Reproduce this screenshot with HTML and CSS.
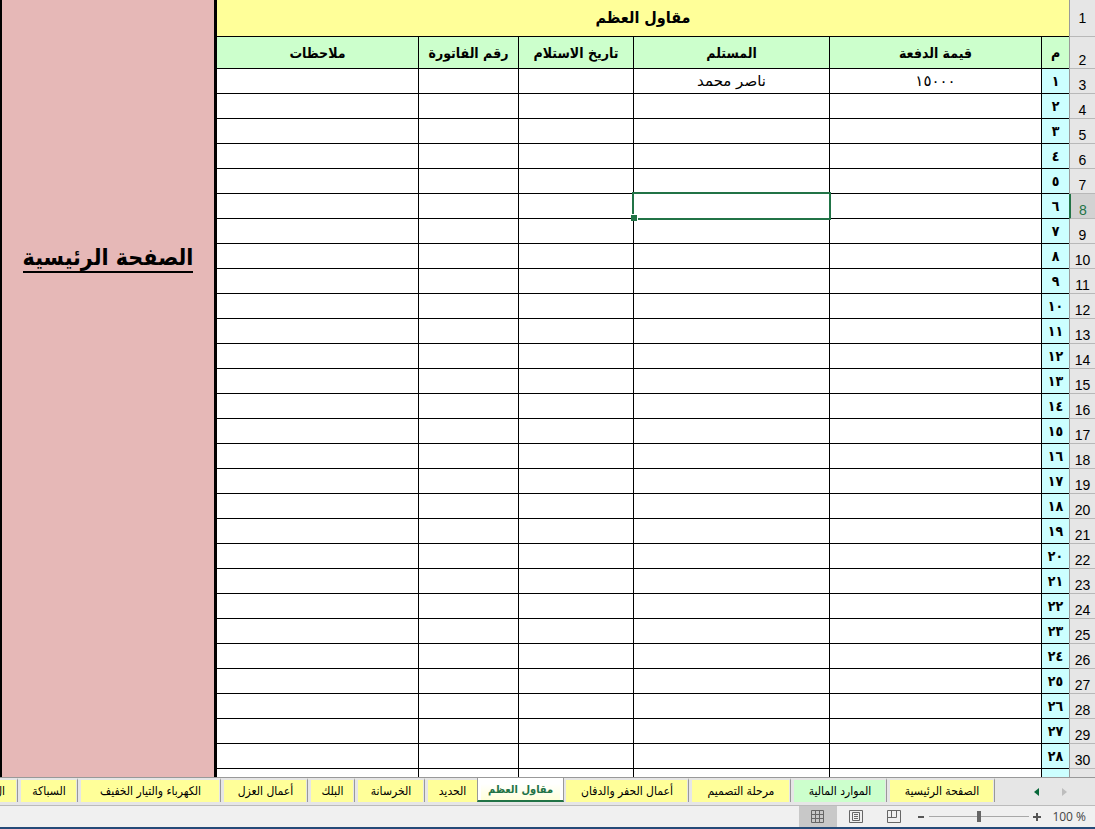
FILE: index.html
```html
<!DOCTYPE html>
<html lang="ar" dir="rtl">
<head>
<meta charset="utf-8">
<title>مقاول العظم</title>
<link rel="stylesheet" href="styles.css">
</head>
<body>
<main class="sheet">
  <table class="grid">
    <colgroup>
      <col class="col-head"><col class="col-index"><col class="col-value"><col class="col-receiver"><col class="col-date"><col class="col-invoice"><col class="col-notes">
    </colgroup>
    <thead>
      <tr class="title-row"><th class="row-head" scope="row">1</th><th class="title" colspan="6">مقاول العظم</th></tr>
      <tr class="label-row"><th class="row-head" scope="row">2</th><th scope="col">م</th><th scope="col">قيمة الدفعة</th><th scope="col">المستلم</th><th scope="col">تاريخ الاستلام</th><th scope="col">رقم الفاتورة</th><th scope="col">ملاحظات</th></tr>
    </thead>
    <tbody id="rows"></tbody>
  </table>
  <aside class="side"><a class="home-link" href="#home">الصفحة الرئيسية</a></aside>
</main>
<nav class="tabs" aria-label="أوراق العمل">
  <div class="tab-nav">
    <button class="arrow" aria-label="التالي" disabled><svg width="6" height="8" viewBox="0 0 6 8"><path d="M0 0L5 4L0 8Z" fill="#bdbdbd"/></svg></button>
    <button class="arrow" aria-label="السابق"><svg width="6" height="8" viewBox="0 0 6 8"><path d="M5 0L0 4L5 8Z" fill="#08683a"/></svg></button>
  </div>
  <button class="tab w-home">الصفحة الرئيسية</button>
  <button class="tab green w-funds">الموارد المالية</button>
  <button class="tab w-design">مرحلة التصميم</button>
  <button class="tab w-dig">أعمال الحفر والدفان</button>
  <button class="tab active w-frame" aria-current="page">مقاول العظم</button>
  <button class="tab after-active w-steel">الحديد</button>
  <button class="tab w-concrete">الخرسانة</button>
  <button class="tab w-block">البلك</button>
  <button class="tab w-insulation">أعمال العزل</button>
  <button class="tab w-electric">الكهرباء والتيار الخفيف</button>
  <button class="tab w-plumbing">السباكة</button>
  <button class="tab rest">ال</button>
</nav>
<footer class="status" dir="ltr">
  <button class="view selected" aria-label="عادي"><svg width="14" height="14" viewBox="0 0 14 14" fill="none" stroke="#666"><path d="M.5 .5H12.500V12.500H.5ZM4.500 .5V12.500M8.500 .5V12.500M.5 4.500H12.500M.5 8.500H12.500"/></svg></button>
  <button class="view" aria-label="تخطيط الصفحة"><svg width="14" height="14" viewBox="0 0 14 14" fill="none" stroke="#666"><path d="M.5 .5H13.500V12.500H.5ZM3.500 2.500H10.500V10.500H3.500ZM5 4.500H9M5 6.500H9M5 8.500H9"/></svg></button>
  <button class="view" aria-label="فواصل الصفحات"><svg width="14" height="14" viewBox="0 0 14 14" fill="none" stroke="#666"><path d="M.5 .5H13.500V12.500H.5ZM.5 7.500H9.500V.5M4.500 .5V7.500"/></svg></button>
  <button class="step" aria-label="تصغير"><svg width="8" height="8" viewBox="0 0 8 8"><path d="M1 3H7V5H1Z" fill="#555"/></svg></button>
  <input class="zoom" type="range" min="0" max="100" value="50" aria-label="تكبير">
  <button class="step" aria-label="تكبير"><svg width="8" height="8" viewBox="0 0 8 8"><path d="M3 0H5V3H8V5H5V8H3V5H0V3H3Z" fill="#555"/></svg></button>
  <span class="percent">100 %</span>
</footer>
<script src="rows.js"></script>
</body>
</html>
```

FILE: styles.css
```css
* { box-sizing: border-box; }
html, body { height: 100%; margin: 0; }
body {
  display: flex;
  flex-direction: column;
  background: #fff;
  color: #000;
  font-family: "DejaVu Sans Condensed", "DejaVu Sans", sans-serif;
  overflow: hidden;
}
button { border: 0; padding: 0; background: none; font: inherit; color: inherit; }

.sheet { flex: 1; min-height: 0; display: flex; align-items: flex-start; overflow: hidden; }
.grid { flex: 1; min-width: 0; table-layout: fixed; border-spacing: 0; }
.col-head { width: 26px; }
.col-index { width: 28px; }
.col-value { width: 212px; }
.col-receiver { width: 196px; }
.col-date { width: 115px; }
.col-invoice { width: 100px; }
.col-notes { width: 201px; }

.grid th, .grid td {
  height: 25px;
  padding: 0;
  border-bottom: 1px solid #000;
  border-left: 1px solid #000;
  text-align: center;
  line-height: 20px;
  white-space: nowrap;
}
.grid td { font-family: "DejaVu Sans", sans-serif; font-size: 15px; }
.grid th.index { background: #cff; font-size: 14px; }
.grid th:last-child, .grid td:last-child { border-left: 0; }
.grid .title-row th { height: 37px; }
.grid .label-row th { height: 32px; background: #cfc; font-size: 14px; }
.grid th.title { background: #ff9; font-size: 16px; }
.grid th.row-head {
  background: #e6e6e6;
  border-bottom-color: #b8b8b8;
  border-left-color: #999;
  font: 14px/16px "Liberation Sans", sans-serif;
  vertical-align: bottom;
}
.grid .title-row th.row-head { vertical-align: middle; }
.grid .label-row th.row-head { background: #e6e6e6; }
.grid th.row-head.current { background: #d2d2d2; color: #217346; border-left: 2px solid #217346; }

.picked { position: relative; }
.picked::before {
  content: "";
  position: absolute;
  inset: -2px;
  border: 2px solid #217346;
}
.picked::after {
  content: "";
  position: absolute;
  left: -3px;
  bottom: -3px;
  width: 6px;
  height: 6px;
  background: #217346;
  border-top: 1px solid #fff;
  border-right: 1px solid #fff;
}

.side {
  flex: 0 0 217px;
  align-self: stretch;
  padding-top: 243px;
  border-left: 2px solid #000;
  border-right: 3px solid #000;
  background: #e6b8b7;
  text-align: center;
}
.home-link {
  display: inline-block;
  border-bottom: 2px solid #000;
  color: #000;
  font-size: 23px;
  font-weight: bold;
  line-height: 28px;
  text-decoration: none;
}

.tabs {
  flex: 0 0 29px;
  display: flex;
  border-top: 1px solid #999;
  border-bottom: 1px solid #bbb;
  background: #e6e6e6;
  overflow: hidden;
}
.tab-nav { flex: 0 0 100px; display: flex; padding-right: 25px; gap: 18px; align-items: center; }
.arrow { width: 10px; height: 20px; display: flex; align-items: center; justify-content: center; }
.tab {
  flex: none;
  height: 24px;
  border: solid #e6e6e6;
  border-width: 2px 1px 0 3px;
  border-right-color: #999;
  background: #ff9;
  box-shadow: inset -1px 0 #e6e6e6;
  font-size: 12px;
  line-height: 20px;
  white-space: nowrap;
}
.tab.green { background: #cfc; }
.tab.after-active { border-right-width: 0; box-shadow: none; }
.tab.w-dig { border-left-width: 2px; }
.tab.active {
  height: 25px;
  margin-top: -1px;
  padding-top: 3px;
  border: solid #999;
  border-width: 0 1px 2px;
  border-bottom-color: #217346;
  background: linear-gradient(#fff 30%, #ffffd9);
  box-shadow: inset 3px 0 #fff, inset -3px 0 #fff;
  color: #217346;
  font-weight: bold;
  font-size: 11px;
}
.w-home { width: 108px; }
.w-funds { width: 96px; }
.w-design { width: 102px; }
.w-dig { width: 125px; }
.w-frame { width: 87px; }
.w-steel { width: 52px; }
.w-concrete { width: 70px; }
.w-block { width: 47px; }
.w-insulation { width: 87px; }
.w-electric { width: 143px; }
.w-plumbing { width: 60px; }
.rest { flex: 1; padding-right: 12px; border-left-width: 0; text-align: right; }

.status {
  flex: 0 0 23px;
  display: flex;
  justify-content: flex-end;
  align-items: center;
  padding-right: 9px;
  background: #f0f0f0;
  border-bottom: 2px solid #254a78;
}
.view { width: 38px; height: 21px; display: flex; align-items: center; justify-content: center; }
.view.selected { background: #c8c8c8; }
.step { width: 16px; height: 20px; display: flex; align-items: center; justify-content: center; }
.zoom { width: 100px; height: 16px; margin: 0; appearance: none; background: none; }
.zoom::-webkit-slider-runnable-track { height: 1px; background: #a8a8a8; }
.zoom::-webkit-slider-thumb { appearance: none; width: 4px; height: 11px; margin-top: -5px; border-radius: 0; background: #666; }
.percent { margin-left: 7px; color: #444; font: 12px/20px "Open Sans", sans-serif; white-space: nowrap; }
```

FILE: rows.js
```js
const arabic = n => String(n).replace(/\d/g, d => "٠١٢٣٤٥٦٧٨٩"[d]);
const filled = { 1: ["١٥٠٠٠", "ناصر محمد"] };
const selectedRow = 6;
const body = document.getElementById("rows");
for (let i = 1; i <= 29; i++) {
  const [value = "", receiver = ""] = filled[i] || [];
  const on = i === selectedRow;
  body.insertAdjacentHTML("beforeend",
    `<tr><th scope="row" class="row-head${on ? " current" : ""}">${i === 29 ? "" : i + 2}</th>` +
    `<th class="index">${arabic(i)}</th><td>${value}</td><td${on ? ' class="picked"' : ""}>${receiver}</td>` +
    `<td></td><td></td><td></td></tr>`);
}
```
